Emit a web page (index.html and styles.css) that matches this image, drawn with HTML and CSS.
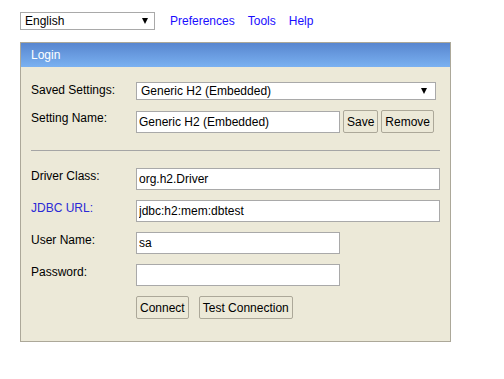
FILE: index.html
```html
<!DOCTYPE html>
<html lang="en">
<head>
    <meta charset="UTF-8">
    <meta name="viewport" content="width=device-width, initial-scale=1.0">
    <title>H2 Console</title>
    <link rel="stylesheet" href="styles.css">
</head>
<body>
<div class="toolbar">
    <span class="select-wrap lang-wrap">
        <select class="drop lang-select">
            <option>English</option>
        </select>
    </span>
    <a href="#" class="nav-link first">Preferences</a>
    <a href="#" class="nav-link">Tools</a>
    <a href="#" class="nav-link">Help</a>
</div>

<div class="login">
    <div class="login-head">Login</div>
    <div class="login-body">
        <div class="form-row">
            <label class="field-label">Saved Settings:</label>
            <span class="select-wrap settings-wrap">
                <select class="drop settings-select">
                    <option>Generic H2 (Embedded)</option>
                </select>
            </span>
        </div>
        <div class="form-row">
            <label class="field-label">Setting Name:</label>
            <div class="controls">
                <input type="text" class="text-input short" value="Generic H2 (Embedded)">
                <button class="btn">Save</button>
                <button class="btn">Remove</button>
            </div>
        </div>

        <hr class="divider">

        <div class="form-row">
            <label class="field-label">Driver Class:</label>
            <input type="text" class="text-input long" value="org.h2.Driver">
        </div>
        <div class="form-row">
            <label class="field-label url-label">JDBC URL:</label>
            <input type="text" class="text-input long" value="jdbc:h2:mem:dbtest">
        </div>
        <div class="form-row">
            <label class="field-label">User Name:</label>
            <input type="text" class="text-input short" value="sa">
        </div>
        <div class="form-row">
            <label class="field-label">Password:</label>
            <input type="password" class="text-input short" value="">
        </div>
        <div class="form-row">
            <span class="field-label"></span>
            <div class="controls wide-gap">
                <button class="btn">Connect</button>
                <button class="btn">Test Connection</button>
            </div>
        </div>
    </div>
</div>
</body>
</html>
```

FILE: styles.css
```css
body {
    font-family: "Liberation Sans", Arial, sans-serif;
    font-size: 12px;
    color: #000;
    margin: 0;
    padding: 12px 20px;
    background: #fff;
}
.toolbar {
    display: flex;
    align-items: center;
    height: 18px;
}
.select-wrap {
    position: relative;
    display: inline-block;
}
.select-wrap::after {
    content: "";
    position: absolute;
    top: 6px;
    right: 7px;
    border-left: 3.5px solid transparent;
    border-right: 3.5px solid transparent;
    border-top: 6px solid #000;
    pointer-events: none;
}
.settings-wrap::after {
    right: 9px;
}
.drop {
    -webkit-appearance: none;
    appearance: none;
    display: block;
    height: 18px;
    box-sizing: border-box;
    border: 1px solid #a9a9a9;
    border-radius: 0;
    background: #fff;
    font-family: inherit;
    font-size: 12px;
    color: #000;
    padding: 0 4px;
    margin: 0;
    outline: none;
}
.lang-select {
    width: 135px;
}
.settings-select {
    width: 300px;
}
.nav-link {
    color: #1a0dff;
    text-decoration: none;
    margin-left: 13px;
}
.nav-link.first {
    margin-left: 15px;
}
.login {
    margin-top: 12px;
    width: 431px;
    box-sizing: border-box;
    border: 1px solid #aca899;
    background: #ece9d8;
}
.login-head {
    height: 24px;
    line-height: 24px;
    padding-left: 10px;
    color: #fff;
    background: linear-gradient(to bottom, #5886cf, #7ab1f1);
}
.login-body {
    padding: 15px 10px 22px 10px;
}
.form-row {
    display: flex;
    align-items: flex-start;
    margin-bottom: 10px;
}
.form-row:last-child {
    margin-bottom: 0;
}
.field-label {
    width: 105px;
    flex: none;
    line-height: 14px;
    padding-top: 1px;
}
.url-label {
    color: #2a2ad6;
}
.controls {
    display: flex;
    align-items: center;
    gap: 3px;
    height: 23px;
}
.controls.wide-gap {
    gap: 10px;
}
.text-input {
    height: 22px;
    box-sizing: border-box;
    border: 1px solid #a9a9a9;
    padding: 0 2px;
    margin: 0;
    font-family: inherit;
    font-size: 12px;
    color: #000;
    background: #fff;
    outline: none;
}
.text-input.long {
    width: 304px;
}
.text-input.short {
    width: 204px;
}
.btn {
    height: 23px;
    box-sizing: border-box;
    padding: 0 3px;
    margin: 0;
    border: 1px solid #aca899;
    border-radius: 2px;
    background: #ece9d8;
    font-family: inherit;
    font-size: 12px;
    color: #000;
    cursor: pointer;
}
.divider {
    border: 0;
    border-top: 1px solid #a5a5a5;
    height: 0;
    margin: 17px 0;
}
```
